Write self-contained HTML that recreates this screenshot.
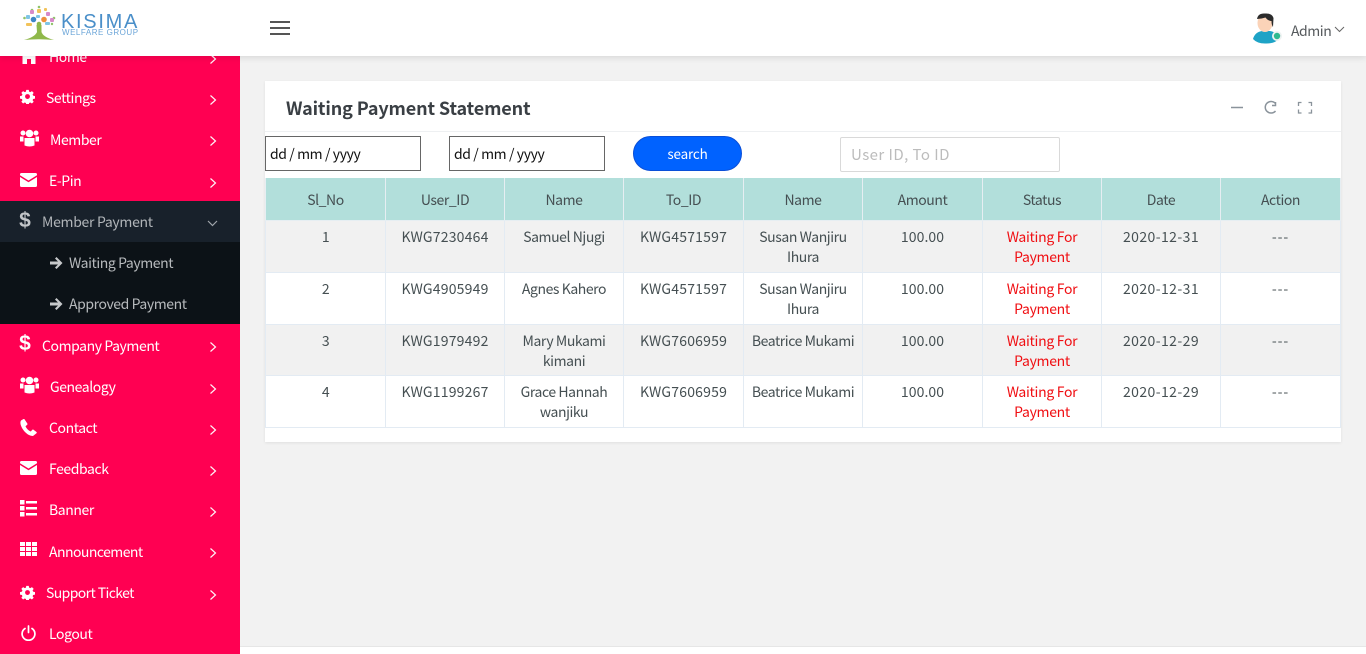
<!DOCTYPE html>
<html><head><meta charset="utf-8"><title>Waiting Payment Statement</title>
<style>
*{box-sizing:border-box}
html,body{margin:0;padding:0;width:1366px;height:654px;overflow:hidden;background:#f2f2f2;font-family:"Noto Sans CJK SC","Liberation Sans",sans-serif;font-size:14px;color:#404e4d}
.a{position:absolute;white-space:nowrap}
#top{position:absolute;left:0;top:0;width:1366px;height:56px;background:#fff;box-shadow:0 2px 6px rgba(0,0,0,.1);z-index:5}
#side{position:absolute;left:0;top:0;width:240px;height:654px;background:#ff0052;overflow:hidden;z-index:4}
#side .t{position:absolute;color:#fff;font-size:14px;line-height:20px;letter-spacing:-.42px;white-space:nowrap}
#side svg{position:absolute}
.dk{position:absolute;left:0;width:240px}
#foot{position:absolute;left:240px;top:646px;width:1126px;height:8px;background:#fff;border-top:1px solid #e6e6e6}
#card{position:absolute;left:265px;top:81px;width:1076px;height:361px;background:#fff;box-shadow:0 1px 3px rgba(0,0,0,.08)}
#hl{position:absolute;left:265px;top:131px;width:1076px;height:1px;background:#eef0f2}
table{position:absolute;left:265px;top:178px;width:1075px;border-collapse:collapse;table-layout:fixed;font-size:14px;letter-spacing:-.43px;color:#454f52}
td,th{border:1px solid #e3ebf3;text-align:center;vertical-align:top;font-weight:400;padding:6px 4px 0;line-height:20.5px}
th{background:#b2dfdb;height:42px;padding-top:12px;border-color:#e6eef2;border-top:0}
tr.o td{background:#f1f1f1}
.r{color:#f00e12;letter-spacing:-.3px}
.i{letter-spacing:.2px}
.d{letter-spacing:.42px}
.m{letter-spacing:.1px}
.x{letter-spacing:.9px}
</style></head><body>
<div id="foot"></div>
<div id="card"></div><div id="hl"></div>

<div class="a" style="left:286px;top:95px;font-size:18px;line-height:26px;font-weight:700;letter-spacing:-.13px;color:#3a3f44">Waiting Payment Statement</div>

<svg class="a" style="left:1225px;top:96px" width="95" height="24" viewBox="0 0 95 24" fill="none" stroke="#8a939b" stroke-width="1.5">
<path d="M6 11.500H18"/>
<path d="M50.500 7.500A5.800 5.800 0 1 0 50.500 15M50.500 6V9.500H47"/>
<path d="M73.500 10V6.500H76.500M83.500 6.500H86.500V10M86.500 13.500V17H83.500M76.500 17H73.500V13.500" stroke-width="1.300"/>
</svg>

<div class="a" style="left:265px;top:136px;width:156px;height:35px;border:1px solid #666;background:#fff;color:#111;padding-left:4px;line-height:35px;letter-spacing:-.4px">dd / mm / yyyy</div>
<div class="a" style="left:449px;top:136px;width:156px;height:35px;border:1px solid #666;background:#fff;color:#111;padding-left:4px;line-height:35px;letter-spacing:-.4px">dd / mm / yyyy</div>
<div class="a" style="left:633px;top:136px;width:109px;height:35px;border:1px solid #0a4fd8;border-radius:18px;background:#0062ff;color:#fff;text-align:center;line-height:33px;font-size:13.500px;letter-spacing:-.2px">search</div>
<div class="a" style="left:840px;top:137px;width:220px;height:35px;border:1px solid #d9d9d9;border-radius:2px;background:#fff;color:#bcbcbc;padding-left:10px;line-height:34px;font-size:15px;letter-spacing:.45px">User ID, To ID</div>

<table>
<colgroup><col style="width:120px"><col style="width:119px"><col style="width:119px"><col style="width:120px"><col style="width:119px"><col style="width:120px"><col style="width:119px"><col style="width:119px"><col style="width:120px"></colgroup>
<tr><th>Sl_No</th><th>User_ID</th><th>Name</th><th>To_ID</th><th>Name</th><th>Amount</th><th>Status</th><th>Date</th><th>Action</th></tr>
<tr class="o" style="height:52px"><td>1</td><td class="i">KWG7230464</td><td>Samuel Njugi</td><td class="i">KWG4571597</td><td>Susan Wanjiru Ihura</td><td class="m">100.00</td><td class="r">Waiting For Payment</td><td class="d">2020-12-31</td><td class="x">---</td></tr>
<tr style="height:52px"><td>2</td><td class="i">KWG4905949</td><td>Agnes Kahero</td><td class="i">KWG4571597</td><td>Susan Wanjiru Ihura</td><td class="m">100.00</td><td class="r">Waiting For Payment</td><td class="d">2020-12-31</td><td class="x">---</td></tr>
<tr class="o" style="height:51px"><td>3</td><td class="i">KWG1979492</td><td>Mary Mukami kimani</td><td class="i">KWG7606959</td><td>Beatrice Mukami</td><td class="m">100.00</td><td class="r">Waiting For Payment</td><td class="d">2020-12-29</td><td class="x">---</td></tr>
<tr style="height:52px"><td>4</td><td class="i">KWG1199267</td><td>Grace Hannah wanjiku</td><td class="i">KWG7606959</td><td>Beatrice Mukami</td><td class="m">100.00</td><td class="r">Waiting For Payment</td><td class="d">2020-12-29</td><td class="x">---</td></tr>
</table>

<div id="side">
<div class="dk" style="top:201px;height:41px;background:#18212b"></div>
<div class="dk" style="top:242px;height:82px;background:#0c1217"></div>

<svg style="left:20px;top:46px" width="18" height="18" viewBox="0 0 18 18" fill="#fff"><path d="M9 2L0 10h2.500v8h4.500v-5h4v5h4.500v-8H18z"/></svg>
<div class="t" style="left:49px;top:47px">Home</div>

<svg style="left:20px;top:89px" width="15" height="15" viewBox="0 0 16 16"><path d="M6.500 0h3l.4 2.200 1.500.6L13.300 1.500l2.100 2.100-1.300 1.900.6 1.500 2.300.5v3l-2.300.4-.6 1.500 1.300 1.900-2.100 2.100-1.900-1.300-1.500.6-.4 2.300h-3l-.4-2.300-1.500-.6-1.900 1.300L.6 14.300l1.300-1.900-.6-1.500L-1 10.500v-3l2.300-.5.6-1.500L.6 3.600 2.700 1.500l1.900 1.300 1.500-.6z" transform="translate(.9 .9) scale(.89)" fill="#fff"/><circle cx="8" cy="8" r="2.600" fill="#ff0052"/></svg>
<div class="t" style="left:46px;top:88px">Settings</div>

<svg style="left:20px;top:129px" width="19" height="18" viewBox="0 0 19 18" fill="#fff"><circle cx="3" cy="4" r="2.500"/><circle cx="16" cy="4" r="2.500"/><circle cx="9.500" cy="4.500" r="3.800"/><path d="M0 7.500h3.500v5H0zM15.500 7.500H19v5h-3.500zM4.500 9h10v7.500q-5 2-10 0z"/></svg>
<div class="t" style="left:50px;top:130px">Member</div>

<svg style="left:20px;top:173px" width="17" height="14" viewBox="0 0 17 14" fill="#fff"><path d="M0 1.500Q0 0 1.500 0h14Q17 0 17 1.500v.8L8.500 7.500 0 2.300zM0 4l8.500 5.200L17 4v8.500q0 1.500-1.500 1.500h-14Q0 14 0 12.500z"/></svg>
<div class="t" style="left:49px;top:171px">E-Pin</div>

<div class="a" style="left:19px;top:209px;width:12px;text-align:center;font-family:'Liberation Sans',sans-serif;font-weight:700;font-size:21px;line-height:24px;color:#c2c5c8">$</div>
<div class="t" style="left:42px;top:212px;color:#b1b5b9;letter-spacing:-.3px">Member Payment</div>

<svg style="left:50px;top:257px" width="13" height="12" viewBox="0 0 13 12" fill="#c6c8ca"><path d="M6.500 0L12.500 6 6.500 12 5 10.500 8 7.500H0v-3h8L5 1.500z"/></svg>
<div class="t" style="left:69px;top:253px;color:#b7babd">Waiting Payment</div>
<svg style="left:50px;top:298px" width="13" height="12" viewBox="0 0 13 12" fill="#c6c8ca"><path d="M6.500 0L12.500 6 6.500 12 5 10.500 8 7.500H0v-3h8L5 1.500z"/></svg>
<div class="t" style="left:69px;top:294px;color:#b7babd">Approved Payment</div>

<div class="a" style="left:19px;top:332px;width:12px;text-align:center;font-family:'Liberation Sans',sans-serif;font-weight:700;font-size:21px;line-height:24px;color:#fff">$</div>
<div class="t" style="left:42px;top:336px">Company Payment</div>

<svg style="left:20px;top:376px" width="19" height="18" viewBox="0 0 19 18" fill="#fff"><circle cx="3" cy="4" r="2.500"/><circle cx="16" cy="4" r="2.500"/><circle cx="9.500" cy="4.500" r="3.800"/><path d="M0 7.500h3.500v5H0zM15.500 7.500H19v5h-3.500zM4.500 9h10v7.500q-5 2-10 0z"/></svg>
<div class="t" style="left:50px;top:377px">Genealogy</div>

<svg style="left:20px;top:419px" width="17" height="17" viewBox="0 0 17 17" fill="#fff"><path d="M3.500 0L1 1.500C0 3 0 6 3 10.500c3 4.500 7 6.500 10 6.500l3.500-2.800c.4-.4.3-.9 0-1.200l-3-2.300c-.4-.3-.9-.2-1.200.1l-1.500 1.700c-2.500-1-4.300-3-5.300-5.300l1.700-1.500c.3-.3.400-.8.100-1.200L4.500.2C4.300 0 3.800-.1 3.500 0z"/></svg>
<div class="t" style="left:49px;top:418px">Contact</div>

<svg style="left:20px;top:461px" width="17" height="14" viewBox="0 0 17 14" fill="#fff"><path d="M0 1.500Q0 0 1.500 0h14Q17 0 17 1.500v.8L8.500 7.500 0 2.300zM0 4l8.500 5.200L17 4v8.500q0 1.500-1.500 1.500h-14Q0 14 0 12.500z"/></svg>
<div class="t" style="left:49px;top:459px">Feedback</div>

<svg style="left:20px;top:500px" width="17" height="17" viewBox="0 0 17 17" fill="#fff"><path d="M0 0h4.500v4.500H0zM0 6h4.500v4.500H0zM0 12h4.500v4.500H0zM6 1h11v2.500H6zM6 7h11v2.500H6zM6 13h11v2.500H6z"/></svg>
<div class="t" style="left:49px;top:500px">Banner</div>

<svg style="left:20px;top:542px" width="17" height="14" viewBox="0 0 17 14" fill="#fff"><path d="M0 0h5v4H0zM6 0h5v4H6zM12 0h5v4h-5zM0 5h5v4H0zM6 5h5v4H6zM12 5h5v4h-5zM0 10h5v4H0zM6 10h5v4H6zM12 10h5v4h-5z"/></svg>
<div class="t" style="left:49px;top:542px;letter-spacing:-.55px">Announcement</div>

<svg style="left:20px;top:585px" width="15" height="15" viewBox="0 0 16 16"><path d="M6.500 0h3l.4 2.200 1.500.6L13.300 1.500l2.100 2.100-1.300 1.900.6 1.500 2.300.5v3l-2.300.4-.6 1.500 1.300 1.900-2.100 2.100-1.900-1.300-1.500.6-.4 2.300h-3l-.4-2.300-1.500-.6-1.900 1.300L.6 14.300l1.300-1.900-.6-1.500L-1 10.500v-3l2.300-.5.6-1.500L.6 3.600 2.700 1.500l1.900 1.300 1.500-.6z" transform="translate(.9 .9) scale(.89)" fill="#fff"/><circle cx="8" cy="8" r="2.600" fill="#ff0052"/></svg>
<div class="t" style="left:46px;top:583px;letter-spacing:-.6px">Support Ticket</div>

<svg style="left:21px;top:625px" width="15" height="16" viewBox="0 0 15 16" fill="none" stroke="#fff" stroke-width="1.700" stroke-linecap="round"><path d="M4 3.500A6.400 6.400 0 1 0 11 3.500M7.500 1V7.500"/></svg>
<div class="t" style="left:49px;top:624px">Logout</div>

<svg style="left:0;top:0" width="240" height="654" fill="none" stroke="#fff" stroke-width="1.200" stroke-opacity=".95">
<path d="M210.500 54.500L215.500 59 210.500 63.500M210.500 95.500L215.500 100 210.500 104.500M210.500 136.500L215.500 141 210.500 145.500M210.500 178.500L215.500 183 210.500 187.500M210.500 342.500L215.500 347 210.500 351.500M210.500 384.500L215.500 389 210.500 393.500M210.500 425.500L215.500 430 210.500 434.500M210.500 466.500L215.500 471 210.500 475.500M210.500 507.500L215.500 512 210.500 516.500M210.500 548.500L215.500 553 210.500 557.500M210.500 590.500L215.500 595 210.500 599.500"/>
<path d="M208 221L212.500 225.500 217 221" stroke="#a8adb2"/>
</svg>
</div>

<div id="top">
<svg class="a" style="left:22px;top:5px" width="36" height="36" viewBox="0 0 36 36">
<path d="M2 35Q13 32 15 27L14.500 20h5L19.500 27Q21 32 32 35Q17 33.500 2 35z" fill="#8fb84a"/>
<g fill="#8fc36a"><circle cx="2.500" cy="13" r="1.300"/><circle cx="32" cy="13" r="1.300"/><circle cx="17" cy="2" r="1.300"/><circle cx="10" cy="5" r="1.300"/><circle cx="30" cy="19" r="1.200"/></g>
<g fill="#d78bc9"><rect x="8" y="5" width="4" height="4" rx="1"/><rect x="24" y="7" width="4" height="4" rx="1"/><rect x="28" y="13" width="4" height="4" rx="1"/></g>
<g fill="#f2c35a"><rect x="15" y="4" width="4" height="4" rx="1"/><rect x="4" y="18" width="6" height="3" rx="1"/><rect x="22" y="3" width="3" height="3" rx="1"/></g>
<g fill="#7fc5e6"><rect x="4" y="10" width="4" height="4" rx="1"/><rect x="14" y="10" width="4" height="3" rx="1"/><rect x="23" y="17" width="5" height="3" rx="1"/></g>
<circle cx="11.500" cy="14.500" r="2.800" fill="#3e86c6"/><circle cx="22" cy="14.500" r="2.800" fill="#ef8f3c"/><circle cx="17" cy="19" r="2.300" fill="#8fb84a"/>
</svg>
<div class="a" style="left:61px;top:10px;font-family:'Liberation Sans',sans-serif;font-size:20px;line-height:24px;letter-spacing:1.700px;color:#4a8fc9">KISIMA</div>
<div class="a" style="left:62px;top:28px;font-family:'Liberation Sans',sans-serif;font-size:8px;line-height:10px;letter-spacing:.52px;color:#6ba5d8">WELFARE GROUP</div>

<svg class="a" style="left:270px;top:21px" width="20" height="15" viewBox="0 0 20 15" fill="#555"><rect y="0" width="20" height="2"/><rect y="6" width="20" height="2"/><rect y="12" width="20" height="2"/></svg>

<svg class="a" style="left:1250px;top:10px" width="34" height="36" viewBox="0 0 34 36">
<path d="M3 29Q5 22 12 21H20Q27 22 29 29Q24 34 15 33.500Q7 33.500 3 29z" fill="#1ea3c6"/>
<ellipse cx="15" cy="13" rx="7.500" ry="9" fill="#fbd3b8"/>
<path d="M7 9Q8 3 15 3.500Q22 3 23.500 8L23 17Q21.500 15 21.500 11Q18 11 15.500 7.500Q11 9 7 9z" fill="#2b2b2b"/>
<circle cx="27" cy="26" r="5" fill="#eef2f2"/><circle cx="27" cy="26" r="3.200" fill="#2fb98f"/>
</svg>
<div class="a" style="left:1291px;top:21px;font-size:14px;line-height:20px;letter-spacing:-.45px;color:#55595c">Admin</div>
<svg class="a" style="left:1334px;top:26px" width="11" height="7" viewBox="0 0 11 7" fill="none" stroke="#666" stroke-width="1"><path d="M1 1L5.500 5.500 10 1"/></svg>
</div>
</body></html>
